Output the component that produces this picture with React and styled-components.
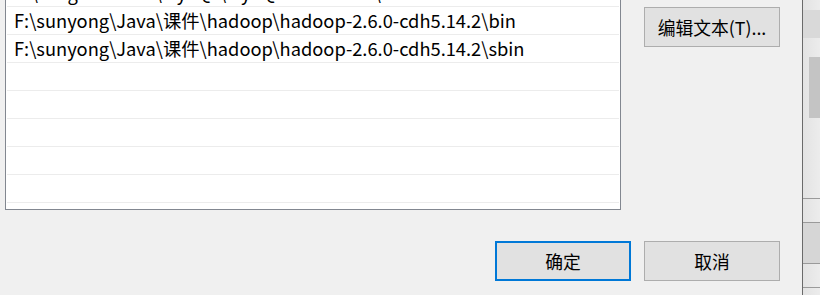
import styled, { createGlobalStyle } from "styled-components";

const GlobalStyle = createGlobalStyle`
    html, body {
        margin: 0;
        padding: 0;
        background: #f0f0f0;
        overflow: hidden;
    }
    body {
        font-family: "Noto Sans CJK SC", "Noto Sans", sans-serif;
        font-size: 17.8px;
        color: #000;
    }
`

const paths = [
    "C:\\Program Files\\MySQL\\MySQL Server 5.6\\bin",
    "F:\\sunyong\\Java\\课件\\hadoop\\hadoop-2.6.0-cdh5.14.2\\bin",
    "F:\\sunyong\\Java\\课件\\hadoop\\hadoop-2.6.0-cdh5.14.2\\sbin",
    "", "", "", "", "", "",
];

function App() {
    return (
        <Screen>
            <GlobalStyle />
            <Dialog>
                <TopArea>
                    <ListBox>
                        <Rows>
                            {paths.map((p, i) => (
                                <Row key={i}>{p}</Row>
                            ))}
                        </Rows>
                    </ListBox>
                    <SideButtons>
                        <Button>编辑文本(T)...</Button>
                    </SideButtons>
                </TopArea>
                <BottomBar>
                    <Button $primary>确定</Button>
                    <Button>取消</Button>
                </BottomBar>
            </Dialog>
            <BehindWindow>
                <Strip $h={10} />
                <Strip $h={28} $tone="#d9d9d9" />
                <Strip $h={19} />
                <Strip $h={61} $thumb />
                <Strip $h={80} />
                <Strip $h={23} $line />
                <Strip $h={40} $line $tone="#d6d6d6" />
                <Strip $h={23} $line />
                <Strip $h={11} $line />
            </BehindWindow>
        </Screen>
    )
}
export default App;

const Screen = styled.div`
    display: flex;
    width: 820px;
    height: 295px;
    overflow: hidden;
`
const Dialog = styled.div`
    width: 802px;
    height: 295px;
    flex-shrink: 0;
    display: flex;
    flex-direction: column;
    border-right: 1px solid #6a6a6a;
    background: #f0f0f0;
`
const TopArea = styled.div`
    display: flex;
    gap: 23px;
    padding-left: 5px;
`
const ListBox = styled.div`
    width: 614px;
    height: 209px;
    background: #fff;
    border: 1px solid #828790;
    border-top: none;
    overflow: hidden;
`
const Rows = styled.div`
    margin-top: -21px;
    padding: 0 1px;
`
const Row = styled.div`
    height: 27px;
    line-height: 27px;
    font-size: 18.3px;
    border-bottom: 1px solid #ececec;
    padding-left: 7px;
    white-space: nowrap;
`
const SideButtons = styled.div`
    padding-top: 7px;
`
const Button = styled.div`
    box-sizing: border-box;
    width: 136px;
    height: 40px;
    display: flex;
    align-items: center;
    justify-content: center;
    background: #e1e1e1;
    border: ${p => p.$primary ? "2px solid #0078d7" : "1px solid #adadad"};
    white-space: nowrap;
`
const BottomBar = styled.div`
    display: flex;
    justify-content: flex-end;
    gap: 13px;
    padding-right: 22px;
    margin-top: 31px;
`
const BehindWindow = styled.div`
    flex: 1;
    display: flex;
    flex-direction: column;
    background: linear-gradient(to right, #e3e3e3, #ececec);
`
const Strip = styled.div`
    height: ${p => p.$h}px;
    flex-shrink: 0;
    border-top: ${p => p.$line ? "1px solid #9a9a9a" : "none"};
    background: ${p => p.$thumb
        ? "linear-gradient(to right, transparent 6px, #c4c4c4 6px)"
        : p.$tone || "transparent"};
`
